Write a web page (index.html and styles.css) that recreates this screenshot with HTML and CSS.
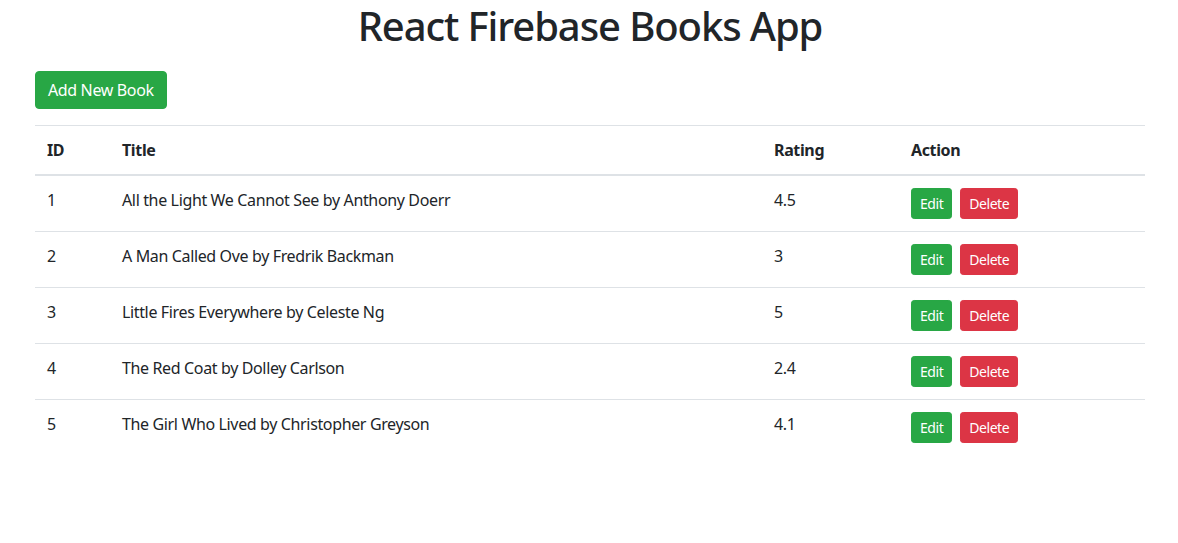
FILE: index.html
```html
<!DOCTYPE html>
<html lang="en">
<head>
<meta charset="utf-8">
<title>React Firebase Books App</title>
<link rel="stylesheet" href="styles.css">
</head>
<body>
<div class="container">
  <h1 class="page-title">React Firebase Books App</h1>
  <div class="toolbar">
    <button class="btn btn-success">Add New Book</button>
  </div>
  <table class="table">
    <thead>
      <tr>
        <th class="col-id">ID</th>
        <th class="col-title">Title</th>
        <th class="col-rating">Rating</th>
        <th class="col-action">Action</th>
      </tr>
    </thead>
    <tbody>
      <tr>
        <td>1</td>
        <td>All the Light We Cannot See by Anthony Doerr</td>
        <td>4.5</td>
        <td><button class="btn btn-sm btn-success">Edit</button><button class="btn btn-sm btn-danger">Delete</button></td>
      </tr>
      <tr>
        <td>2</td>
        <td>A Man Called Ove by Fredrik Backman</td>
        <td>3</td>
        <td><button class="btn btn-sm btn-success">Edit</button><button class="btn btn-sm btn-danger">Delete</button></td>
      </tr>
      <tr>
        <td>3</td>
        <td>Little Fires Everywhere by Celeste Ng</td>
        <td>5</td>
        <td><button class="btn btn-sm btn-success">Edit</button><button class="btn btn-sm btn-danger">Delete</button></td>
      </tr>
      <tr>
        <td>4</td>
        <td>The Red Coat by Dolley Carlson</td>
        <td>2.4</td>
        <td><button class="btn btn-sm btn-success">Edit</button><button class="btn btn-sm btn-danger">Delete</button></td>
      </tr>
      <tr>
        <td>5</td>
        <td>The Girl Who Lived by Christopher Greyson</td>
        <td>4.1</td>
        <td><button class="btn btn-sm btn-success">Edit</button><button class="btn btn-sm btn-danger">Delete</button></td>
      </tr>
    </tbody>
  </table>
</div>
</body>
</html>
```
FILE: styles.css
```css
* { box-sizing: border-box; }
html, body { margin: 0; padding: 0; background: #fff; }
body {
  font-family: "Noto Sans", "Open Sans", "DejaVu Sans", sans-serif;
  font-size: 16px;
  line-height: 1.5;
  color: #212529;
  letter-spacing: -0.36px;
}
.container {
  width: 1140px;
  margin: 0 auto;
  padding: 0 14px 0 16px;
}
.page-title {
  margin: 0 0 19px;
  font-size: 40px;
  font-weight: 500;
  line-height: 52px;
  letter-spacing: -1.1px;
  text-align: center;
}
.toolbar { margin-bottom: 16px; }
.btn {
  display: inline-block;
  font-family: inherit;
  font-size: 16px;
  font-weight: 400;
  line-height: 1.5;
  letter-spacing: -0.36px;
  padding: 6px 12px;
  border: 1px solid transparent;
  border-radius: 4px;
  color: #fff;
  cursor: pointer;
  vertical-align: middle;
}
.btn-sm {
  font-size: 14px;
  letter-spacing: -0.45px;
  padding: 4px 8px;
  border-radius: 3.2px;
  margin-right: 8px;
}
.btn-success { background: #28a745; border-color: #28a745; }
.btn-danger { background: #dc3545; border-color: #dc3545; }
.table {
  width: 100%;
  border-collapse: collapse;
  table-layout: fixed;
}
.table th, .table td {
  padding: 12px;
  text-align: left;
  vertical-align: top;
  border-top: 1px solid #dee2e6;
}
.table th { font-weight: 700; }
.table thead th {
  vertical-align: bottom;
  border-bottom: 2px solid #dee2e6;
}
.table td { border-bottom: 1px solid #dee2e6; }
.table tbody tr:last-child td { border-bottom: none; }
.col-id { width: 75px; }
.col-title { width: 652px; }
.col-rating { width: 137px; }
.col-action { width: auto; }
```
